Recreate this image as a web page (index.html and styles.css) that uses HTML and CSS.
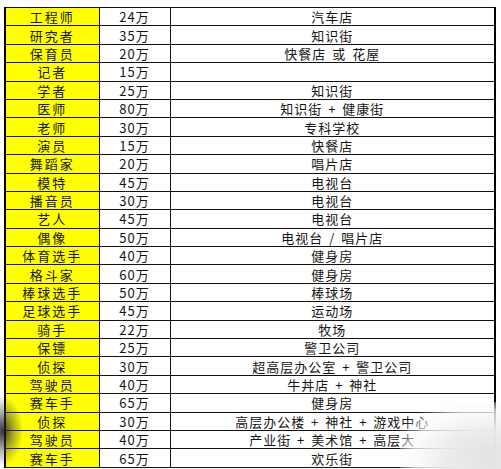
FILE: index.html
```html
<!DOCTYPE html>
<html lang="zh">
<head>
<meta charset="utf-8">
<link rel="stylesheet" href="styles.css">
</head>
<body>
<div class="sheet">
<table class="grid">
<colgroup><col class="c1"><col class="c2"><col class="c3"></colgroup>
<tbody>
<tr><td class="job">工程师</td><td>24万</td><td>汽车店</td></tr>
<tr><td class="job">研究者</td><td>35万</td><td>知识街</td></tr>
<tr><td class="job">保育员</td><td>20万</td><td>快餐店 或 花屋</td></tr>
<tr><td class="job">记者</td><td>15万</td><td></td></tr>
<tr><td class="job">学者</td><td>25万</td><td>知识街</td></tr>
<tr><td class="job">医师</td><td>80万</td><td>知识街 + 健康街</td></tr>
<tr><td class="job">老师</td><td>30万</td><td>专科学校</td></tr>
<tr><td class="job">演员</td><td>15万</td><td>快餐店</td></tr>
<tr><td class="job">舞蹈家</td><td>20万</td><td>唱片店</td></tr>
<tr><td class="job">模特</td><td>45万</td><td>电视台</td></tr>
<tr><td class="job">播音员</td><td>30万</td><td>电视台</td></tr>
<tr><td class="job">艺人</td><td>45万</td><td>电视台</td></tr>
<tr><td class="job">偶像</td><td>50万</td><td>电视台 / 唱片店</td></tr>
<tr><td class="job">体育选手</td><td>40万</td><td>健身房</td></tr>
<tr><td class="job">格斗家</td><td>60万</td><td>健身房</td></tr>
<tr><td class="job">棒球选手</td><td>50万</td><td>棒球场</td></tr>
<tr><td class="job">足球选手</td><td>45万</td><td>运动场</td></tr>
<tr><td class="job">骑手</td><td>22万</td><td>牧场</td></tr>
<tr><td class="job">保镖</td><td>25万</td><td>警卫公司</td></tr>
<tr><td class="job">侦探</td><td>30万</td><td>超高层办公室 + 警卫公司</td></tr>
<tr><td class="job">驾驶员</td><td>40万</td><td>牛丼店 + 神社</td></tr>
<tr><td class="job">赛车手</td><td>65万</td><td>健身房</td></tr>
<tr><td class="job">侦探</td><td>30万</td><td>高层办公楼 + 神社 + 游戏中心</td></tr>
<tr><td class="job">驾驶员</td><td>40万</td><td>产业街 + 美术馆 + 高层大</td></tr>
<tr><td class="job">赛车手</td><td>65万</td><td>欢乐街</td></tr>
</tbody>
</table>
<div class="smudge-left"></div>
<div class="fade-right"></div>
</div>
</body>
</html>
```
FILE: styles.css
```css
html, body {
  margin: 0;
  padding: 0;
  background: #ffffff;
}
.sheet {
  position: relative;
  width: 501px;
  height: 469px;
  overflow: hidden;
  padding: 7px 0 0 4px;
  box-sizing: border-box;
}
.grid {
  border-collapse: collapse;
  table-layout: fixed;
  width: 492px;
  font-family: "Noto Sans CJK SC", "Liberation Sans", sans-serif;
  font-size: 13px;
  color: #151515;
  border-left: 2px solid #000;
  border-right: 2px solid #000;
}
.c1 { width: 94px; }
.c2 { width: 71px; }
.c3 { width: 325px; }
.grid td {
  border: 1px solid #111;
  height: 17.4px;
  padding: 0;
  text-align: center;
  line-height: 17px;
  white-space: nowrap;
  overflow: hidden;
  word-spacing: 2px;
  letter-spacing: 1px;
}
.grid td.job {
  background: #ffff00;
  letter-spacing: 2px;
}
.smudge-left {
  position: absolute;
  left: -8px;
  top: 398px;
  width: 30px;
  height: 66px;
  background: radial-gradient(ellipse at 35% 50%, rgba(20,20,20,0.85) 0%, rgba(70,70,70,0.45) 40%, rgba(255,255,255,0) 75%);
}
.fade-right {
  position: absolute;
  left: 400px;
  top: 402px;
  width: 110px;
  height: 72px;
  background: radial-gradient(ellipse at 80% 75%, rgba(226,226,226,1) 0%, rgba(236,236,236,0.97) 35%, rgba(250,250,250,0.75) 60%, rgba(255,255,255,0) 80%);
}
```
